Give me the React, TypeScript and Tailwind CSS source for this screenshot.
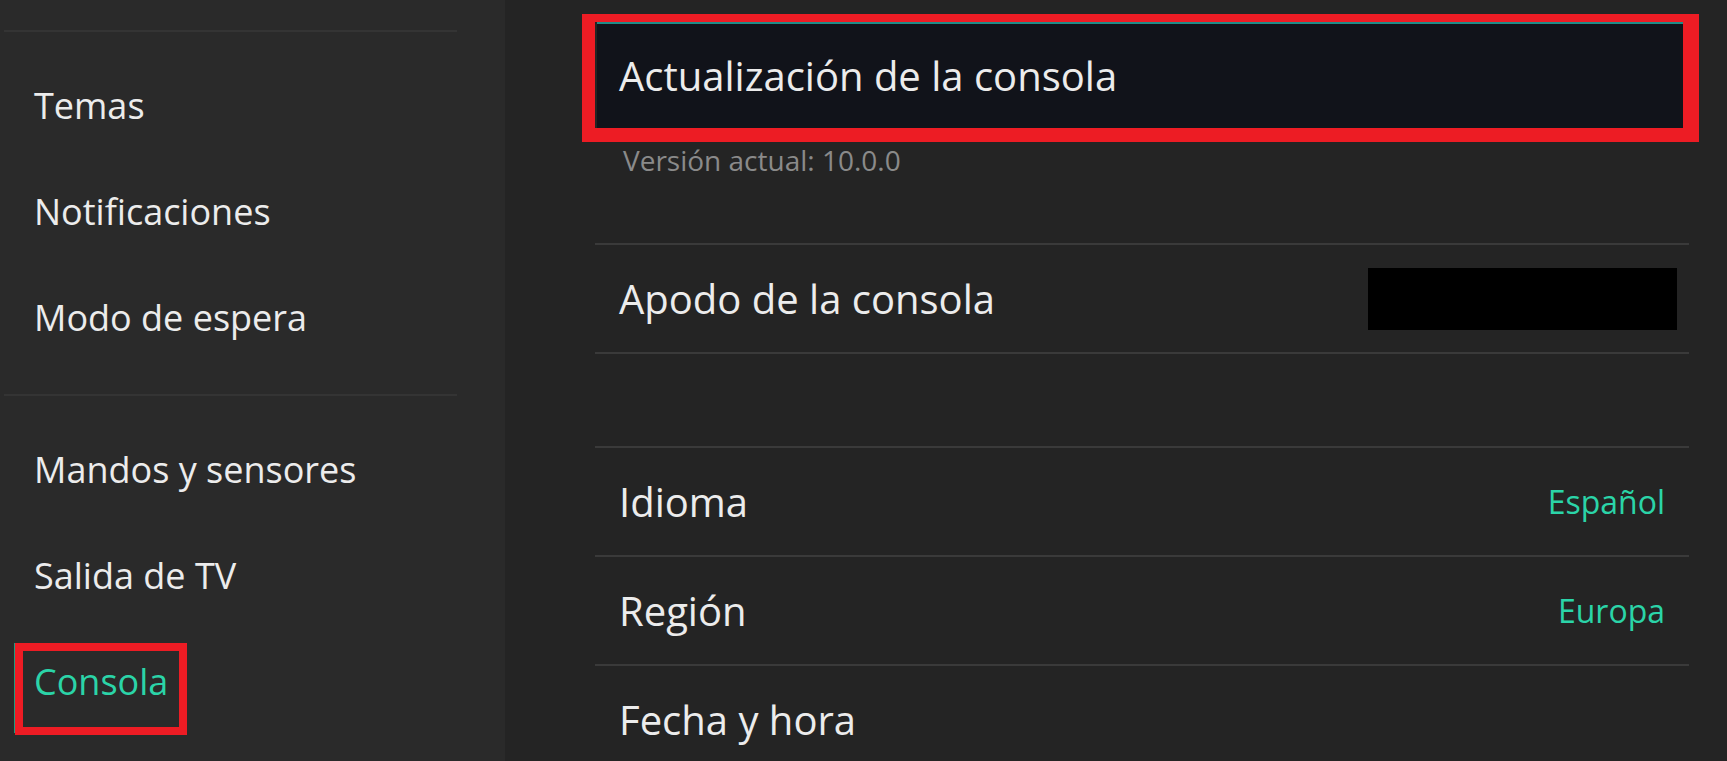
const FONT = "font-['Open_Sans',sans-serif]";

const groups = [
  ["Temas", "Notificaciones", "Modo de espera"],
  ["Mandos y sensores", "Salida de TV", "Consola"],
];

function SideItem({ label, active }: { label: string; active?: boolean }) {
  return (
    <div className="relative h-[106px] flex items-center pl-[34px] pt-[3px]">
      <span className={`text-[36px] leading-none ${active ? "text-[#2bd4a8]" : "text-[#ececec]"}`}>{label}</span>
      {active && (
        <>
          <div className="absolute left-[14px] top-[16px] h-[90px] w-[1px] bg-[#1f9c80]" />
          <div className="absolute left-[15px] top-[16px] h-[92px] w-[172px] border-[8px] border-[#ed1c24]" />
        </>
      )}
    </div>
  );
}

function Row({ label, value, children }: { label: string; value?: string; children?: React.ReactNode }) {
  return (
    <div className="h-[107px] flex items-center justify-between px-[24px]">
      <span className="text-[40px] leading-none text-[#ececec]">{label}</span>
      {value && <span className="text-[32px] leading-none text-[#2bd4a8]">{value}</span>}
      {children}
    </div>
  );
}

const Line = () => <div className="h-[2px] bg-[#3a3a3a]" />;

export default function App() {
  return (
    <div className={`${FONT} flex h-[761px] w-full overflow-hidden bg-[#242424]`}>
      <aside className="w-[505px] shrink-0 bg-[#2a2a2a] pt-[30px]">
        {groups.map((items, gi) => (
          <div key={gi} className={gi ? "mt-[25px]" : ""}>
            <div className="ml-[4px] w-[453px] h-[2px] bg-[#343434]" />
            <div className="mt-[19px]">
              {items.map((label) => (
                <SideItem key={label} label={label} active={label === "Consola"} />
              ))}
            </div>
          </div>
        ))}
      </aside>

      <main className="flex-1 pl-[90px] pr-[38px] pt-[22px]">
        <div className="relative ml-[2px] mr-[6px] h-[106px] bg-[#11131a] border-t-[2px] border-[#1f8c88] flex items-center px-[22px]">
          <span className="text-[40px] leading-none text-[#ececec]">Actualización de la consola</span>
          <div className="absolute -left-[15px] -top-[10px] -right-[16px] -bottom-[14px] border-l-[13px] border-t-[8px] border-r-[16px] border-b-[14px] border-[#ed1c24]" />
        </div>
        <p className="mt-[13px] pl-[28px] text-[28px] text-[#8a8a8a] leading-[38px]">Versión actual: 10.0.0</p>

        <div className="mt-[64px]">
          <Line />
          <Row label="Apodo de la consola">
            <div className="w-[309px] h-[62px] bg-black -mr-[12px]" />
          </Row>
          <Line />
        </div>

        <div className="mt-[92px]">
          <Line />
          <Row label="Idioma" value="Español" />
          <Line />
          <Row label="Región" value="Europa" />
          <Line />
          <Row label="Fecha y hora" />
        </div>
      </main>
    </div>
  );
}
